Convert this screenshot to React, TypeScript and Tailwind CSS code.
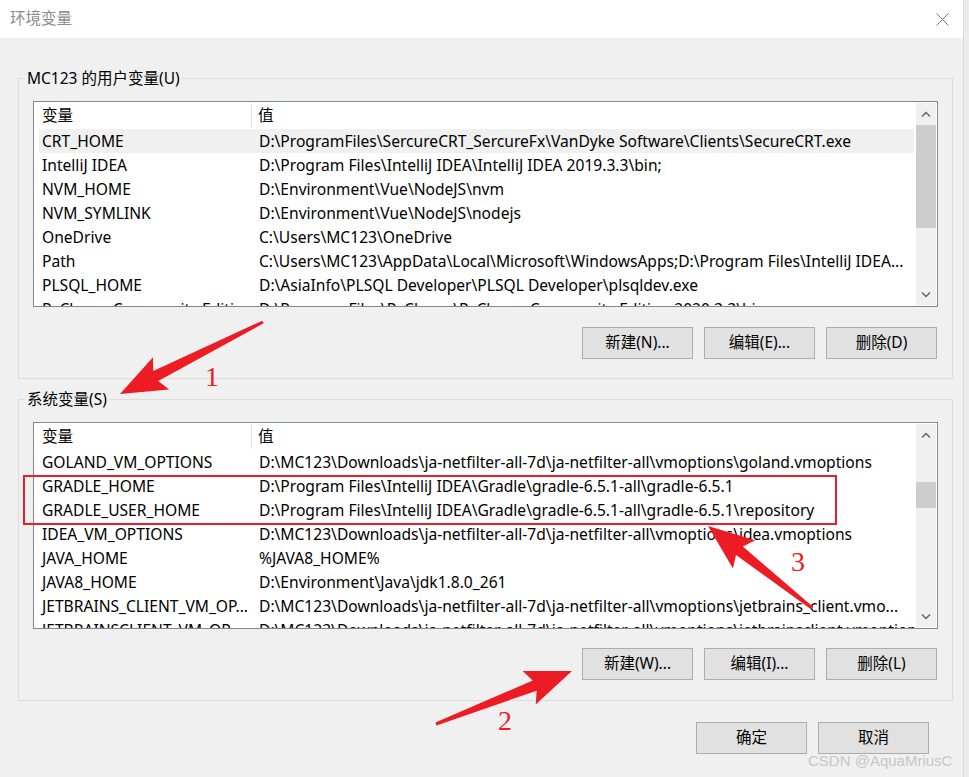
import React from "react";

const font = "font-['Noto_Sans','Noto_Sans_CJK_SC',sans-serif]";

const userVars: [string, string][] = [
  ["CRT_HOME", "D:\\ProgramFiles\\SercureCRT_SercureFx\\VanDyke Software\\Clients\\SecureCRT.exe"],
  ["IntelliJ IDEA", "D:\\Program Files\\IntelliJ IDEA\\IntelliJ IDEA 2019.3.3\\bin;"],
  ["NVM_HOME", "D:\\Environment\\Vue\\NodeJS\\nvm"],
  ["NVM_SYMLINK", "D:\\Environment\\Vue\\NodeJS\\nodejs"],
  ["OneDrive", "C:\\Users\\MC123\\OneDrive"],
  ["Path", "C:\\Users\\MC123\\AppData\\Local\\Microsoft\\WindowsApps;D:\\Program Files\\IntelliJ IDEA..."],
  ["PLSQL_HOME", "D:\\AsiaInfo\\PLSQL Developer\\PLSQL Developer\\plsqldev.exe"],
  ["PyCharm Community Edition", "D:\\Program Files\\PyCharm\\PyCharm Community Edition 2020.3.3\\bin;"],
];

const sysVars: [string, string][] = [
  ["GOLAND_VM_OPTIONS", "D:\\MC123\\Downloads\\ja-netfilter-all-7d\\ja-netfilter-all\\vmoptions\\goland.vmoptions"],
  ["GRADLE_HOME", "D:\\Program Files\\IntelliJ IDEA\\Gradle\\gradle-6.5.1-all\\gradle-6.5.1"],
  ["GRADLE_USER_HOME", "D:\\Program Files\\IntelliJ IDEA\\Gradle\\gradle-6.5.1-all\\gradle-6.5.1\\repository"],
  ["IDEA_VM_OPTIONS", "D:\\MC123\\Downloads\\ja-netfilter-all-7d\\ja-netfilter-all\\vmoptions\\idea.vmoptions"],
  ["JAVA_HOME", "%JAVA8_HOME%"],
  ["JAVA8_HOME", "D:\\Environment\\Java\\jdk1.8.0_261"],
  ["JETBRAINS_CLIENT_VM_OP...", "D:\\MC123\\Downloads\\ja-netfilter-all-7d\\ja-netfilter-all\\vmoptions\\jetbrains_client.vmo..."],
  ["JETBRAINSCLIENT_VM_OP...", "D:\\MC123\\Downloads\\ja-netfilter-all-7d\\ja-netfilter-all\\vmoptions\\jetbrainsclient.vmoptions"],
];

function Chevron({ up }: { up?: boolean }) {
  return (
    <svg width="10" height="6" viewBox="0 0 10 6">
      <path
        d={up ? "M1 5.5 L5 1.5 L9 5.5" : "M1 0.5 L5 4.5 L9 0.5"}
        fill="none"
        stroke="#606060"
        strokeWidth="1.4"
      />
    </svg>
  );
}

function VarList({
  rows,
  height,
  thumbTop,
  thumbHeight,
  selected,
}: {
  rows: [string, string][];
  height: string;
  thumbTop: string;
  thumbHeight: string;
  selected?: number;
}) {
  return (
    <div className={`flex border border-[#828790] bg-white ${height}`}>
      <div className="flex-1 min-w-0 overflow-hidden">
        <div className="flex h-[27px] items-center text-[15.6px] text-black">
          <div className="w-[218px] h-[25px] pl-[8px] flex items-center border-r border-[#e5e5e5]">
            变量
          </div>
          <div className="pl-[6px]">值</div>
        </div>
        {rows.map(([name, value], i) => (
          <div
            key={name}
            className={`ml-[5px] mr-[2px] flex h-[24px] pt-[1px] items-center text-[15.6px] text-black whitespace-nowrap ${
              i === selected ? "bg-[#f0f0f0]" : ""
            }`}
          >
            <div className="w-[213px] shrink-0 pl-[3px] overflow-hidden">{name}</div>
            <div className="flex-1 min-w-0 pl-[7px] overflow-hidden">{value}</div>
          </div>
        ))}
      </div>
      <div className="w-[20px] shrink-0 mr-[1px] my-[1px] bg-[#f0f0f0] flex flex-col items-center">
        <div className="h-[21px] flex items-center justify-center">
          <Chevron up />
        </div>
        <div className={`w-full bg-[#cdcdcd] ${thumbTop} ${thumbHeight}`} />
        <div className="flex-1" />
        <div className="h-[21px] flex items-center justify-center">
          <Chevron />
        </div>
      </div>
    </div>
  );
}

function Btn({ label }: { label: string }) {
  return (
    <button className="w-[111px] h-[32px] border border-[#adadad] bg-[#e1e1e1] text-[15.5px] text-black">
      {label}
    </button>
  );
}

function arrowPoints(tx: number, ty: number, px: number, py: number) {
  const dx = px - tx;
  const dy = py - ty;
  const len = Math.hypot(dx, dy);
  const ux = dx / len;
  const uy = dy / len;
  const nx = -uy;
  const ny = ux;
  const head = 40;
  const bx = px - ux * head;
  const by = py - uy * head;
  const wx = bx - ux * 6;
  const wy = by - uy * 6;
  const pts = [
    [tx + nx * 1.5, ty + ny * 1.5],
    [bx + nx * 5.5, by + ny * 5.5],
    [wx + nx * 18, wy + ny * 18],
    [px, py],
    [wx - nx * 18, wy - ny * 18],
    [bx - nx * 5.5, by - ny * 5.5],
    [tx - nx * 1.5, ty - ny * 1.5],
  ];
  return pts.map((p) => p.join(",")).join(" ");
}

export default function App() {
  return (
    <div className={`relative w-[969px] h-[777px] overflow-hidden bg-[#f0f0f0] flex ${font}`}>
      <div className="w-[963px] shrink-0 flex flex-col">
        <div className="h-[38px] bg-white flex items-center justify-between pl-[10px] pr-[14px]">
          <span className="text-[15.5px] text-[#8c8c8c]">环境变量</span>
          <svg width="13" height="13" viewBox="0 0 13 13">
            <path d="M0.5 0.5 L12.5 12.5 M12.5 0.5 L0.5 12.5" stroke="#7a7a7a" strokeWidth="1" />
          </svg>
        </div>

        <fieldset className="min-w-0 mt-[30px] ml-[18px] mr-[10px] border border-[#dcdcdc] p-0">
          <legend className="ml-[6px] px-[2px] text-[15.5px] leading-[20px] text-black">
            MC123 的用户变量(U)
          </legend>
          <div className="px-[14px] pt-[13px] pb-[19px]">
            <VarList
              rows={userVars}
              height="h-[206px]"
              thumbTop="mt-[1px]"
              thumbHeight="h-[103px]"
              selected={0}
            />
            <div className="mt-[20px] flex justify-end gap-[11px] pr-[1px]">
              <Btn label="新建(N)..." />
              <Btn label="编辑(E)..." />
              <Btn label="删除(D)" />
            </div>
          </div>
        </fieldset>

        <fieldset className="min-w-0 mt-[10px] ml-[18px] mr-[10px] border border-[#dcdcdc] p-0">
          <legend className="ml-[6px] px-[2px] text-[15.5px] leading-[20px] text-black">
            系统变量(S)
          </legend>
          <div className="px-[14px] pt-[13px] pb-[20px]">
            <VarList
              rows={sysVars}
              height="h-[207px]"
              thumbTop="mt-[37px]"
              thumbHeight="h-[26px]"
            />
            <div className="mt-[19px] flex justify-end gap-[11px] pr-[1px]">
              <Btn label="新建(W)..." />
              <Btn label="编辑(I)..." />
              <Btn label="删除(L)" />
            </div>
          </div>
        </fieldset>

        <div className="mt-[21px] flex justify-end gap-[11px] pr-[34px]">
          <Btn label="确定" />
          <Btn label="取消" />
        </div>
      </div>
      <div className="flex-1 border-l border-[#d9d9d9] bg-[#ececec]" />

      <svg className="absolute inset-0 pointer-events-none" width="969" height="777">
        <rect x="24" y="476" width="812" height="48" fill="none" stroke="#e81f2a" strokeWidth="2" />
        <polygon points={arrowPoints(263, 322, 120, 394)} fill="#ed1c24" />
        <polygon points={arrowPoints(436, 724, 572, 671)} fill="#ed1c24" />
        <polygon points={arrowPoints(812, 608, 708, 526)} fill="#ed1c24" />
      </svg>
      <span className="absolute left-[205px] top-[363px] text-[28px] leading-none text-[#ed1c24] font-['Liberation_Serif',serif]">
        1
      </span>
      <span className="absolute left-[498px] top-[707px] text-[28px] leading-none text-[#ed1c24] font-['Liberation_Serif',serif]">
        2
      </span>
      <span className="absolute left-[791px] top-[548px] text-[28px] leading-none text-[#ed1c24] font-['Liberation_Serif',serif]">
        3
      </span>
      <span className="absolute left-[808px] top-[750px] text-[15px] text-[#c6c6c6] font-['Liberation_Sans',sans-serif]">
        CSDN @AquaMriusC
      </span>
    </div>
  );
}
